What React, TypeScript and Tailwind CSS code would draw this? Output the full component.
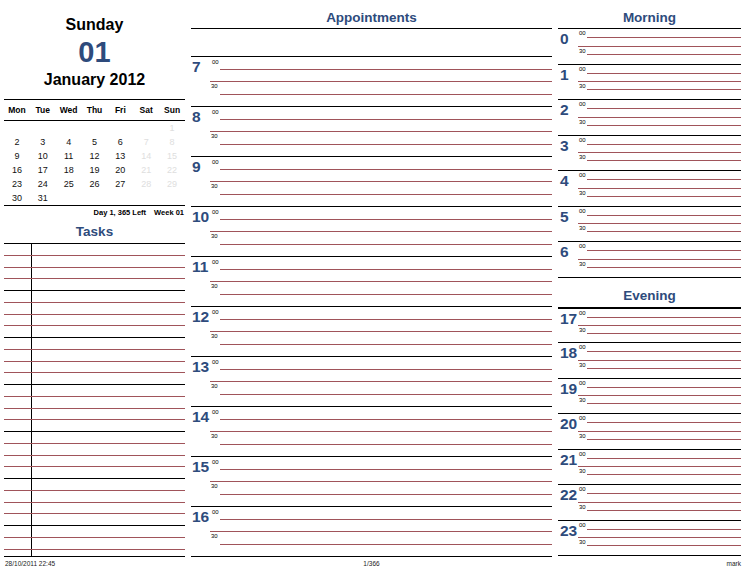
const blue = "text-[#2e4b7c]";
const red = "border-[#a0545a]";

const dayNames = ["Mon", "Tue", "Wed", "Thu", "Fri", "Sat", "Sun"];
const weeks: (number | null)[][] = [
  [null, null, null, null, null, null, 1],
  [2, 3, 4, 5, 6, 7, 8],
  [9, 10, 11, 12, 13, 14, 15],
  [16, 17, 18, 19, 20, 21, 22],
  [23, 24, 25, 26, 27, 28, 29],
  [30, 31, null, null, null, null, null],
];

const apptHours = [7, 8, 9, 10, 11, 12, 13, 14, 15, 16];
const morningHours = [0, 1, 2, 3, 4, 5, 6];
const eveningHours = [17, 18, 19, 20, 21, 22, 23];

function ApptHour({ hour }: { hour: number }) {
  return (
    <div className="flex h-[50px] border-t border-black">
      <div className={`w-[19px] pl-[1px] pt-[1px] text-[15.5px] font-bold leading-[17px] ${blue}`}>
        {hour}
      </div>
      <div className="flex flex-1 flex-col">
        <div className="flex h-[13px]">
          <span className="w-[10px] pl-[2px] pt-[2px] text-[6px] leading-[6px]">00</span>
          <span className={`flex-1 border-b ${red}`} />
        </div>
        <div className={`h-[12px] border-b ${red}`} />
        <div className="flex h-[13px]">
          <span className="w-[10px] pl-[1px] pt-[1px] text-[6px] leading-[6px]">30</span>
          <span className={`flex-1 border-b ${red}`} />
        </div>
      </div>
    </div>
  );
}

function SlotHour({ hour, first }: { hour: number; first?: boolean }) {
  return (
    <div className={`flex h-[35.5px] border-black ${first ? "border-t-2" : "border-t"}`}>
      <div className={`w-[20px] pl-[2px] pt-[1px] text-[15.5px] font-bold leading-[17px] ${blue}`}>
        {hour}
      </div>
      <div className="flex flex-1 flex-col">
        <div className="flex h-[9px]">
          <span className="w-[9px] pl-[1px] pt-[1px] text-[6px] leading-[6px]">00</span>
          <span className={`flex-1 border-b ${red}`} />
        </div>
        <div className={`h-[8.5px] border-b ${red}`} />
        <div className="flex h-[8px]">
          <span className="w-[9px] pl-[1px] pt-[1px] text-[6px] leading-[6px]">30</span>
          <span className={`flex-1 border-b ${red}`} />
        </div>
      </div>
    </div>
  );
}

function Calendar() {
  return (
    <div className="mt-[9px] border-t border-black">
      <div className="grid h-[21px] grid-cols-7 items-center border-b border-black text-center text-[8.5px] font-bold">
        {dayNames.map((d) => (
          <span key={d}>{d}</span>
        ))}
      </div>
      <div className="grid grid-cols-7 text-center text-[9px] leading-[14px]">
        {weeks.flat().map((d, i) => (
          <span
            key={i}
            className={`h-[14px] ${i % 7 >= 5 ? "text-[#dedede]" : "text-[#111]"}`}
          >
            {d ?? ""}
          </span>
        ))}
      </div>
      <div className="flex h-[15px] items-center justify-end gap-[8px] border-t border-black pr-[1px] text-[7.5px] font-bold">
        <span>Day 1, 365 Left</span>
        <span>Week 01</span>
      </div>
    </div>
  );
}

function Tasks() {
  const rows = Array.from({ length: 26 }, (_, i) => i);
  return (
    <div className="border-t border-black">
      {rows.map((i) => (
        <div
          key={i}
          className={`flex h-[11.75px] border-b ${(i + 1) % 4 === 0 ? "border-black" : red}`}
        >
          <div className="w-[28px] border-r border-black" />
        </div>
      ))}
      <div className="flex h-[7.5px] border-b border-black">
        <div className="w-[28px] border-r border-black" />
      </div>
    </div>
  );
}

export default function App() {
  return (
    <div className="h-[577px] w-[749px] bg-white font-['Liberation_Sans',Arial,sans-serif] text-black">
      <div className="flex h-[556px] items-start gap-[6px] pl-[4px]">
        {/* left: date + month + tasks */}
        <div className="flex w-[181px] flex-col">
          <div className="pt-[15px] text-center text-[16px] font-bold leading-[20px]">Sunday</div>
          <div className={`mt-[2px] text-center text-[29px] font-bold leading-[30px] ${blue}`}>01</div>
          <div className="mt-[3px] text-center text-[16px] font-bold leading-[20px]">January 2012</div>
          <Calendar />
          <div className={`h-[23px] pt-[5px] text-center text-[13.5px] font-bold leading-[14px] ${blue}`}>
            Tasks
          </div>
          <Tasks />
        </div>

        {/* middle: appointments */}
        <div className="flex w-[361px] flex-col">
          <div className={`h-[29px] border-b border-black pt-[11px] text-center text-[13.5px] font-bold leading-[14px] ${blue}`}>
            Appointments
          </div>
          <div className="h-[27px]" />
          <div className="border-b border-black">
            {apptHours.map((h) => (
              <ApptHour key={h} hour={h} />
            ))}
          </div>
        </div>

        {/* right: morning / evening */}
        <div className="flex w-[183px] flex-col">
          <div className={`h-[28px] pt-[11px] text-center text-[13.5px] font-bold leading-[14px] ${blue}`}>
            Morning
          </div>
          <div className="border-b border-black">
            {morningHours.map((h) => (
              <SlotHour key={h} hour={h} />
            ))}
          </div>
          <div className={`h-[29px] pt-[11px] text-center text-[13.5px] font-bold leading-[14px] ${blue}`}>
            Evening
          </div>
          <div className="border-b border-black">
            {eveningHours.map((h, i) => (
              <SlotHour key={h} hour={h} first={i === 0} />
            ))}
          </div>
        </div>
      </div>

      <div className="flex gap-[6px] pl-[4px] pt-[4px] text-[6.5px] leading-[7px] text-[#222]">
        <span className="w-[181px] pl-[1px]">28/10/2011 22:45</span>
        <span className="w-[361px] text-center">1/366</span>
        <span className="w-[183px] text-right">mark</span>
      </div>
    </div>
  );
}
